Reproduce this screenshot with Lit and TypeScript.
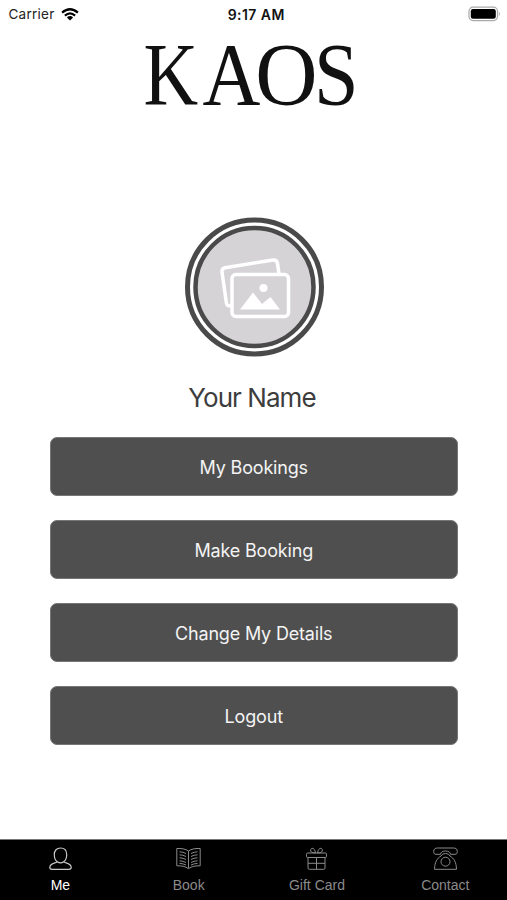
import { LitElement, html, svg, css } from "lit";
import { customElement, property } from "lit/decorators.js";

const icons: Record<string, unknown> = {
  me: svg`<path d="M9.300 14.800C7 13.200 6.300 10.500 6.300 7.500C6.300 3.500 8.800 1 12.500 1S18.700 3.500 18.700 7.500C18.700 10.500 18 13.200 15.700 14.800Q12.500 17 9.300 14.800Z"/><path d="M9.300 14.800C8 16.200 1.800 16 1.800 20.300C1.800 21.700 2.600 22.300 4 22.300H21C22.400 22.300 23.200 21.700 23.200 20.300C23.200 16 17 16.200 15.700 14.800"/>`,
  book: svg`<path d="M12.500 4C9.500 1.800 5 1.300 0.800 1.500V18.800C5 18.700 9.500 19.200 12.500 21.700C15.500 19.200 20 18.700 24.200 18.800V1.500C20 1.300 15.500 1.800 12.500 4ZM12.500 4V21"/><path d="M3.500 4.800Q7 4.900 10 6.500M3.500 7.800Q7 7.900 10 9.500M3.500 10.800Q7 10.900 10 12.500M3.500 13.800Q7 13.900 10 15.500M3.500 16.400Q7 16.500 10 18M21.500 4.800Q18 4.900 15 6.500M21.500 7.800Q18 7.900 15 9.500M21.500 10.800Q18 10.900 15 12.500M21.500 13.800Q18 13.900 15 15.500M21.500 16.400Q18 16.500 15 18"/>`,
  gift: svg`<rect x="2.500" y="6" width="20" height="4.500" rx="1.200"/><path d="M4 10.500V21Q4 22.300 5.300 22.300H19.700Q21 22.300 21 21V10.500M12.500 10.500V22.300M4 16.300H21M11.500 6Q5.800 5.700 6.700 2.700C7.800 -0.300 11.200 1.800 11.500 6ZM13.500 6Q19.200 5.700 18.300 2.700C17.200 -0.300 13.800 1.800 13.500 6Z"/>`,
  phone: svg`<path d="M7.500 7.300H3C1.500 7.300 0.700 6.500 0.700 4.500C0.700 2.200 2 1 4.500 1H20.500C23 1 24.300 2.200 24.300 4.500C24.300 6.500 23.500 7.300 22 7.300H17.500C17.300 5.200 15.500 4 12.500 4S7.700 5.200 7.500 7.300Z"/><path d="M8 9C4 11.500 1.700 15 1.500 22.300H23.500C23.300 15 21 11.500 17 9Q16 6.500 12.500 6.500T8 9Z"/><circle cx="12.500" cy="14.700" r="4.500"/>`,
};

@customElement("status-bar")
class StatusBar extends LitElement {
  static styles = css`
    :host { display: grid; grid-template-columns: 1fr auto 1fr; align-items: center; height: 28px; padding: 0 6px 0 8.500px; color: #222; font-size: 13.500px; }
    .left { display: flex; align-items: center; gap: 6.500px; letter-spacing: 0.250px; }
    .time { font-weight: 600; font-size: 14px; color: #111; padding-left: 3px; letter-spacing: 0.450px; }
    .battery { justify-self: end; }
    svg { display: block; }
  `;
  render() {
    return html`
      <div class="left">
        <span>Carrier</span>
        <svg width="18" height="13" viewBox="0 0 18 13">
          <path d="M1.100 4.700Q9 -2.200 16.900 4.700M3.900 7.600Q9 3 14.100 7.600" fill="none" stroke="#000" stroke-width="2.200"/>
          <path d="M5.900 9.400Q9 6.800 12.100 9.400L9 12.600Z"/>
        </svg>
      </div>
      <span class="time">9:17 AM</span>
      <svg class="battery" width="33" height="16" viewBox="0 0 33 16">
        <rect x="1" y="1.200" width="28.500" height="13.400" rx="4" fill="#fff" stroke="#aaa" stroke-width="1.200"/>
        <rect x="2.800" y="3" width="25" height="9.800" rx="2.200"/>
        <path d="M30.800 5.600Q33 8 30.800 10.400Z" fill="#aaa"/>
      </svg>`;
  }
}

@customElement("tab-item")
class TabItem extends LitElement {
  @property() icon = "";
  @property() label = "";
  static styles = css`
    :host { display: flex; flex-direction: column; align-items: center; padding-top: 7px; color: #8a8a8a; font: 14px/18px "Liberation Sans", Arial, sans-serif; }
    :host([active]) { color: #fff; }
    svg { display: block; fill: none; stroke: currentColor; stroke-width: 1; margin-bottom: 5px; }
    :host([active]) svg { stroke: #c8c8c8; stroke-width: 1.200; }
  `;
  render() {
    return html`<svg width="25" height="24" viewBox="0 0 25 24">${icons[this.icon]}</svg><span>${this.label}</span>`;
  }
}

@customElement("app-root")
class AppRoot extends LitElement {
  static styles = css`
    :host { display: flex; flex-direction: column; width: 507px; height: 900px; overflow: hidden; background: #fff; font-family: Inter, "Liberation Sans", sans-serif; }
    .logo { display: block; align-self: center; flex: none; overflow: visible; width: 230px; height: 120px; margin: -10px 7px 0 0; font-family: "Liberation Serif", serif; font-size: 88px; fill: #111; }
    .avatar { display: block; align-self: center; width: 140px; height: 140px; margin-top: 79px; flex: none; }
    h1 { margin: 21px 0 0; height: 40px; line-height: 40px; text-align: center; font-weight: 400; font-size: 26px; color: #3d3d3d; letter-spacing: -0.950px; padding-right: 3px; }
    .actions { display: flex; flex-direction: column; gap: 24px; padding: 0 49px 0 49.500px; margin-top: 19px; }
    button { height: 59px; border: 1.500px solid #777; border-radius: 7px; background: #4f4f4f; color: #f4f4f4; font: 400 18px/24px Inter, sans-serif; letter-spacing: -0.180px; padding: 2px 0 0; }
    nav { margin-top: auto; height: 60px; border-top: 1px solid #777; background: #000; display: grid; grid-template-columns: repeat(4, 128.300px); }
    tab-item { margin-left: -7.500px; }
  `;
  render() {
    return html`
      <status-bar></status-bar>
      <svg class="logo" viewBox="0 0 230 120" role="img" aria-label="KAOS">
        <text transform="translate(8.500 85.800) scale(.86 1)">K</text>
        <text transform="translate(67.500 85.800) scale(.91 1)">A</text>
        <text transform="translate(120.200 85.800) scale(.98 1)">O</text>
        <text transform="translate(179 85.800) scale(.91 1)">S</text>
      </svg>
      <svg class="avatar" viewBox="0 0 140 140">
        <circle cx="70.500" cy="70" r="67" fill="#fff" stroke="#4a4a4a" stroke-width="5"/>
        <circle cx="70.500" cy="70" r="59" fill="#d5d3d6" stroke="#4a4a4a" stroke-width="4.500"/>
        <g fill="none" stroke="#fff" stroke-width="3.500" stroke-linejoin="round">
          <path d="M48 88.500L45.500 88.800Q43 89 42.400 86L38 55Q37.600 51.500 41 50.700L89 43Q92.500 42.500 93.400 46L95 57"/>
          <rect x="48" y="57.500" width="56.500" height="42" rx="4"/>
        </g>
        <circle cx="79.500" cy="71" r="4" fill="#fff"/>
        <path d="M56 92.500L69 75.500L78 87L86.500 80L96 92.500Z" fill="#fff"/>
      </svg>
      <h1>Your Name</h1>
      <div class="actions">
        ${["My Bookings", "Make Booking", "Change My Details", "Logout"].map((t) => html`<button>${t}</button>`)}
      </div>
      <nav>
        <tab-item active icon="me" label="Me"></tab-item>
        <tab-item icon="book" label="Book"></tab-item>
        <tab-item icon="gift" label="Gift Card"></tab-item>
        <tab-item icon="phone" label="Contact"></tab-item>
      </nav>`;
  }
}
